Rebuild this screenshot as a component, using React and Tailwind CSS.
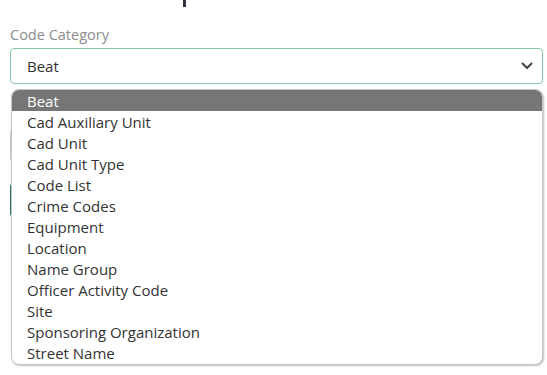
const categories = [
  "Beat",
  "Cad Auxiliary Unit",
  "Cad Unit",
  "Cad Unit Type",
  "Code List",
  "Crime Codes",
  "Equipment",
  "Location",
  "Name Group",
  "Officer Activity Code",
  "Site",
  "Sponsoring Organization",
  "Street Name",
];

function IconChevron() {
  return (
    <svg width="12" height="8" viewBox="0 0 12 8" fill="none">
      <path
        d="M1.5 1.5l4.5 4.5 4.5-4.5"
        stroke="#444"
        strokeWidth="2"
        strokeLinecap="round"
        strokeLinejoin="round"
      />
    </svg>
  );
}

export default function App() {
  return (
    <div
      className="relative w-[547px] h-[375px] bg-white overflow-hidden"
      style={{ fontFamily: '"Open Sans", sans-serif' }}
    >
      <div className="h-[8px] flex">
        <div className="ml-[183px] w-[3px] h-[7px] bg-[#2d3340]" />
      </div>

      <div className="px-[10px] pr-[4px]">
        <p className="mt-[16px] text-[14.5px] leading-[22px] text-[#8c8c8c]">
          Code Category
        </p>
        <div className="mt-[2px] h-[36px] flex items-center justify-between border border-[#86c9a3] rounded-[4px] pl-[16px] pr-[9px]">
          <span className="text-[15px] text-[#333]">Beat</span>
          <IconChevron />
        </div>

        <div className="mt-[44px] h-[34px] border border-[#cfcfcf] rounded-[4px]" />
        <div className="mt-[21px] h-[34px] w-[120px] bg-[#2b7a4f] rounded-[4px]" />
      </div>

      <div className="absolute left-[11px] top-[89px] w-[532px] h-[276px] bg-white rounded-[8px] border border-[#c4c4c4] shadow-[1px_1px_2px_rgba(0,0,0,0.25)] overflow-hidden">
        {categories.map((name, i) => (
          <div
            key={name}
            className={
              i === 0
                ? "h-[21px] flex items-center pl-[15px] pt-[1px] text-[15px] bg-[#767676] text-white"
                : "h-[21px] flex items-center pl-[15px] pt-[1px] text-[15px] text-[#333]"
            }
          >
            {name}
          </div>
        ))}
      </div>
    </div>
  );
}
